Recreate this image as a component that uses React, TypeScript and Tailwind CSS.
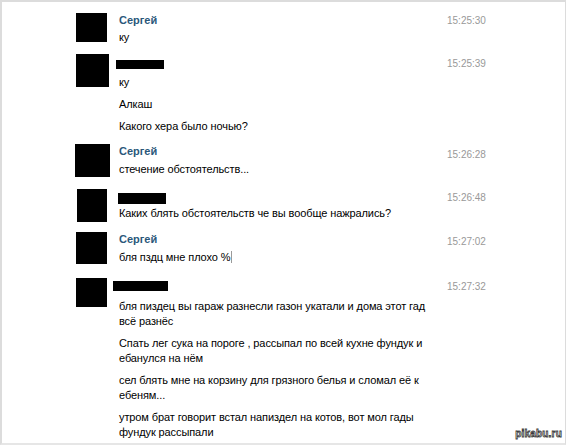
type Row = {
  height: string;
  avatar: string;
  name?: string;
  bar?: string;
  nameGap: string;
  time: string;
  timeGap: string;
  messages: string[][];
};

const rows: Row[] = [
  {
    height: "h-[41px]",
    avatar: "ml-[74px] w-[31px] h-[29px]",
    name: "Сергей",
    nameGap: "mt-[2px]",
    time: "15:25:30",
    timeGap: "mt-0",
    messages: [["ку"]],
  },
  {
    height: "h-[90px]",
    avatar: "ml-[74px] w-[33px] h-[33px]",
    bar: "mt-[6px] -ml-[3px] w-[48px] h-[9px]",
    nameGap: "mt-[6px]",
    time: "15:25:39",
    timeGap: "mt-[2px]",
    messages: [["ку"], ["Алкаш"], ["Какого хера было ночью?"]],
  },
  {
    height: "h-[45px]",
    avatar: "ml-[73px] w-[35px] h-[33px]",
    name: "Сергей",
    nameGap: "mt-[3px]",
    time: "15:26:28",
    timeGap: "mt-[3px]",
    messages: [["стечение обстоятельств..."]],
  },
  {
    height: "h-[43px]",
    avatar: "ml-[75px] w-[30px] h-[33px]",
    bar: "mt-[4px] -ml-[1px] w-[48px] h-[11px]",
    nameGap: "mt-[2px]",
    time: "15:26:48",
    timeGap: "mt-[1px]",
    messages: [["Каких блять обстоятельств че вы вообще нажрались?"]],
  },
  {
    height: "h-[46px]",
    avatar: "ml-[74px] w-[31px] h-[32px]",
    name: "Сергей",
    nameGap: "mt-[3px]",
    time: "15:27:02",
    timeGap: "mt-[2px]",
    messages: [["бля пздц мне плохо %"]],
  },
  {
    height: "h-[160px]",
    avatar: "ml-[74px] w-[31px] h-[29px]",
    bar: "mt-[3px] -ml-[6px] w-[55px] h-[10px]",
    nameGap: "mt-[8px]",
    time: "15:27:32",
    timeGap: "mt-[1px]",
    messages: [
      ["бля пиздец вы гараж разнесли газон укатали и дома этот гад", "всё разнёс"],
      ["Спать лег сука на пороге , рассыпал по всей кухне фундук и", "ебанулся на нём"],
      ["сел блять мне на корзину для грязного белья и сломал её к", "ебеням..."],
      ["утром брат говорит встал напиздел на котов, вот мол гады", "фундук рассыпали"],
    ],
  },
];

function Message({ lines, first, gap, cursor }: { lines: string[]; first: boolean; gap: string; cursor: boolean }) {
  return (
    <div className={first ? gap : "mt-[7px]"}>
      {lines.map((line, i) => (
        <div key={i} className="h-[15px] leading-[15px] whitespace-nowrap text-black">
          {line}
          {cursor && i === lines.length - 1 && (
            <span className="inline-block w-px h-[12px] bg-[#9a9a9a] ml-px align-[-2px]" />
          )}
        </div>
      ))}
    </div>
  );
}

export default function App() {
  return (
    <div className="relative w-[567px] h-[445px] bg-white overflow-hidden font-['Liberation_Sans',Arial,sans-serif] text-[11px]">
      <div className="w-[566px] h-[445px] border-t-2 border-l-2 border-r border-[#dcdcdc] border-b-2 border-b-[#e6e6e6] pt-[11px]">
        {rows.map((row, r) => (
          <div key={r} className={`flex items-start ${row.height}`}>
            <div className="w-[117px] shrink-0">
              <div className={`bg-black ${row.avatar}`} />
            </div>
            <div className="w-[328px] shrink-0 tracking-[-0.1px]">
              {row.name ? (
                <div className="h-[15px] leading-[15px] font-bold text-[#2b587a] tracking-normal">{row.name}</div>
              ) : (
                <div className={`bg-black ${row.bar}`} />
              )}
              {row.messages.map((m, i) => (
                <Message key={i} lines={m} first={i === 0} gap={row.nameGap} cursor={r === 4} />
              ))}
            </div>
            <div className={`text-[10px] leading-[15px] text-[#999] ${row.timeGap}`}>{row.time}</div>
          </div>
        ))}
      </div>
      <div className="absolute right-[5px] bottom-[6px] text-[10px] font-bold leading-none text-white [-webkit-text-stroke:0.8px_#3a3a3a] tracking-[0.2px]">
        pikabu.ru
      </div>
    </div>
  );
}
